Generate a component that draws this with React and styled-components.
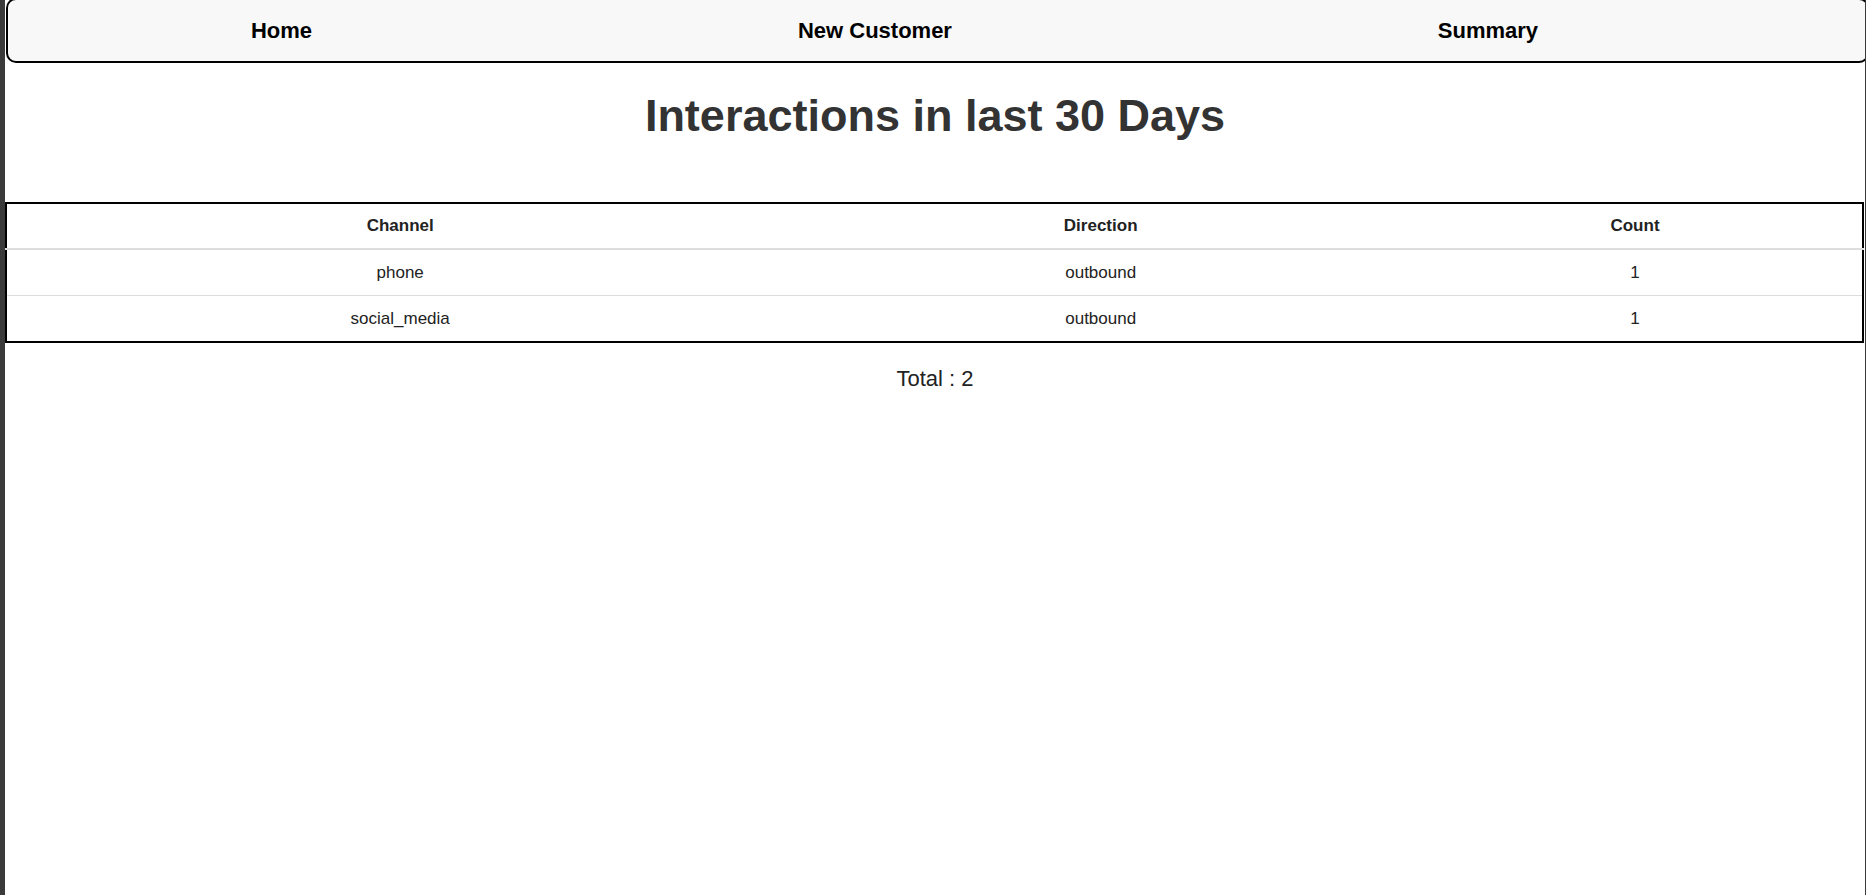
import React from "react";
import styled, { createGlobalStyle } from "styled-components";

const GlobalStyle = createGlobalStyle`
  html, body {
    margin: 0;
    padding: 0;
    background: #3a3a3a;
    overflow: hidden;
  }

  body {
    font-family: "Liberation Sans", Arial, sans-serif;
  }
`;

const Page = styled.div`
  background: #fff;
  margin: 0 1px 0 5px;
  min-height: 100vh;
  overflow: hidden;
`;

const NavBar = styled.nav`
  display: flex;
  justify-content: space-around;
  align-items: center;
  margin: -2px -4px 0 1px;
  height: 61px;
  padding-right: 86px;
  background: #f8f8f8;
  border: 2px solid #000;
  border-radius: 10px;
`;

const NavLink = styled.a`
  color: #000;
  font-size: 22px;
  font-weight: 700;
  text-decoration: none;
  cursor: pointer;
`;

const Title = styled.h1`
  margin: 27px 0 60px;
  font-size: 45px;
  line-height: 52px;
  font-weight: 700;
  text-align: center;
  color: #333;
`;

const Table = styled.table`
  width: calc(100% - 1px);
  border-collapse: collapse;
  table-layout: fixed;
  border: 2px solid #000;
  color: #222;
  font-size: 17px;
`;

const HeadCell = styled.th`
  height: 44px;
  padding: 0 15px;
  font-weight: 700;
  text-align: center;
  border-bottom: 2px solid #ddd;
`;

const Cell = styled.td`
  height: 45px;
  padding: 0 15px;
  text-align: center;
  border-top: ${(p) => (p.$first ? "none" : "1px solid #ddd")};
`;

const Total = styled.p`
  margin: 23px 0 0;
  font-size: 22px;
  line-height: 26px;
  text-align: center;
  color: #222;
`;

const rows = [
  { channel: "phone", direction: "outbound", count: 1 },
  { channel: "social_media", direction: "outbound", count: 1 },
];

const App = () => {
  const total = rows.reduce((sum, r) => sum + r.count, 0);

  return (
    <>
      <GlobalStyle />
      <Page>
        <NavBar>
          <NavLink>Home</NavLink>
          <NavLink>New Customer</NavLink>
          <NavLink>Summary</NavLink>
        </NavBar>

        <Title>Interactions in last 30 Days</Title>

        <Table>
          <colgroup>
            <col style={{ width: "42.4%" }} />
            <col style={{ width: "33.1%" }} />
            <col style={{ width: "24.5%" }} />
          </colgroup>
          <thead>
            <tr>
              <HeadCell>Channel</HeadCell>
              <HeadCell>Direction</HeadCell>
              <HeadCell>Count</HeadCell>
            </tr>
          </thead>
          <tbody>
            {rows.map((r, i) => (
              <tr key={r.channel}>
                <Cell $first={i === 0}>{r.channel}</Cell>
                <Cell $first={i === 0}>{r.direction}</Cell>
                <Cell $first={i === 0}>{r.count}</Cell>
              </tr>
            ))}
          </tbody>
        </Table>

        <Total>Total : {total}</Total>
      </Page>
    </>
  );
};

export default App;
